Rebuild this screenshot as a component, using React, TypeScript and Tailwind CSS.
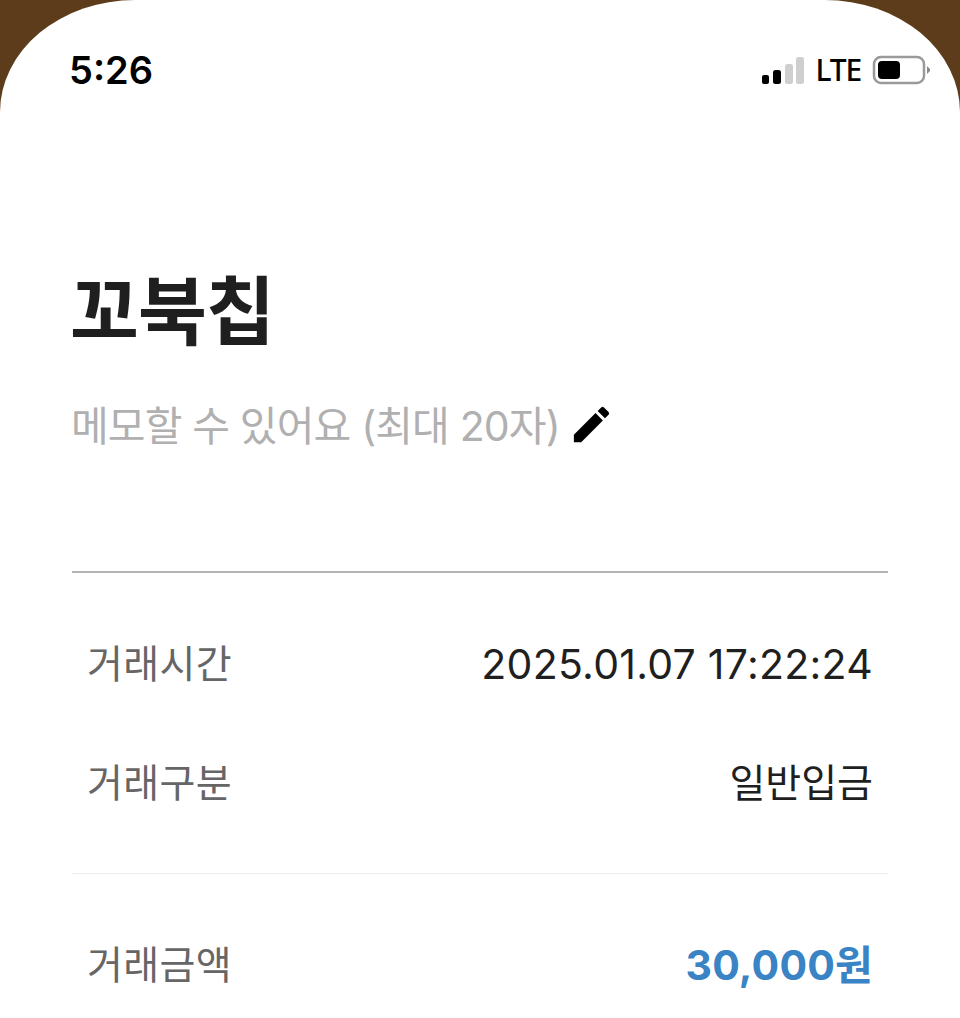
import { MdEdit } from "react-icons/md"

const font = "font-['Inter','Noto_Sans_CJK_KR',sans-serif]"

function InfoRow({ label, value, valueClass }: { label: string; value: string; valueClass?: string }) {
    return (
        <div className="flex items-center justify-between px-[15px]">
            <span className="text-[39px] leading-[44px] tracking-[0.4px] text-[#666666]">{label}</span>
            <span className={valueClass}>{value}</span>
        </div>
    )
}

function StatusIcons() {
    return (
        <div className="flex items-center">
            <svg width="46" height="30" viewBox="0 0 46 30">
                <rect x="2" y="20" width="7" height="9" rx="2" fill="#000" />
                <rect x="13" y="15" width="8" height="14" rx="2.5" fill="#000" />
                <rect x="25" y="9" width="8" height="20" rx="2.5" fill="#cfcfcf" />
                <rect x="36" y="2" width="8" height="27" rx="2.5" fill="#cfcfcf" />
            </svg>
            <span className="ml-[10px] text-[30px] leading-[34px] font-['Noto_Sans',sans-serif] font-medium tracking-[-1.2px] text-black">LTE</span>
            <svg className="ml-[11px]" width="60" height="30" viewBox="0 0 60 30">
                <rect x="2" y="2" width="50" height="26" rx="7" fill="#fff" stroke="#9a9a9a" strokeWidth="2.5" />
                <rect x="6" y="6" width="22" height="18" rx="4" fill="#000" />
                <path d="M55 11 L58 14 L58 16 L55 19 Z" fill="#8a8a8a" />
            </svg>
        </div>
    )
}

export default function App() {
    return (
        <div className={`h-[1018px] w-[960px] overflow-hidden bg-[#5c3c1a] ${font}`}>
            <div className="h-full rounded-tl-[135px_112px] rounded-tr-[135px_112px] bg-white px-[72px]">
                <div className="flex items-center justify-between pt-[49px]">
                    <span className="-ml-[3px] text-[38px] leading-[42px] font-semibold text-black">5:26</span>
                    <div className="-mr-[44px]">
                        <StatusIcons />
                    </div>
                </div>

                <h1 className="-ml-[2px] mt-[181px] text-[75px] leading-[80px] font-bold tracking-[-1px] text-[#1f1f1f]">꼬북칩</h1>

                <div className="mt-[51px] flex items-center">
                    <span className="-ml-[1px] text-[41px] leading-[44px] tracking-[-0.85px] text-[#b0b0b0]">메모할 수 있어요 (최대 20자)</span>
                    <MdEdit className="-mt-[2px] ml-[8px]" size={47} color="#000" />
                </div>

                <div className="mt-[123px] border-t-2 border-[#b4b4b4] pt-[69px]">
                    <InfoRow
                        label="거래시간"
                        value="2025.01.07 17:22:24"
                        valueClass="text-[41px] leading-[44px] tracking-[0.27px] text-[#1f1f1f]"
                    />
                    <div className="mt-[75px]">
                        <InfoRow label="거래구분" value="일반입금" valueClass="text-[39px] leading-[44px] text-[#1f1f1f]" />
                    </div>
                </div>

                <div className="mt-[68px] border-t border-[#ececec] pt-[69px]">
                    <InfoRow label="거래금액" value="30,000원" valueClass="text-[41px] leading-[44px] font-bold tracking-[0.2px] text-[#3a83c4]" />
                </div>
            </div>
        </div>
    )
}
